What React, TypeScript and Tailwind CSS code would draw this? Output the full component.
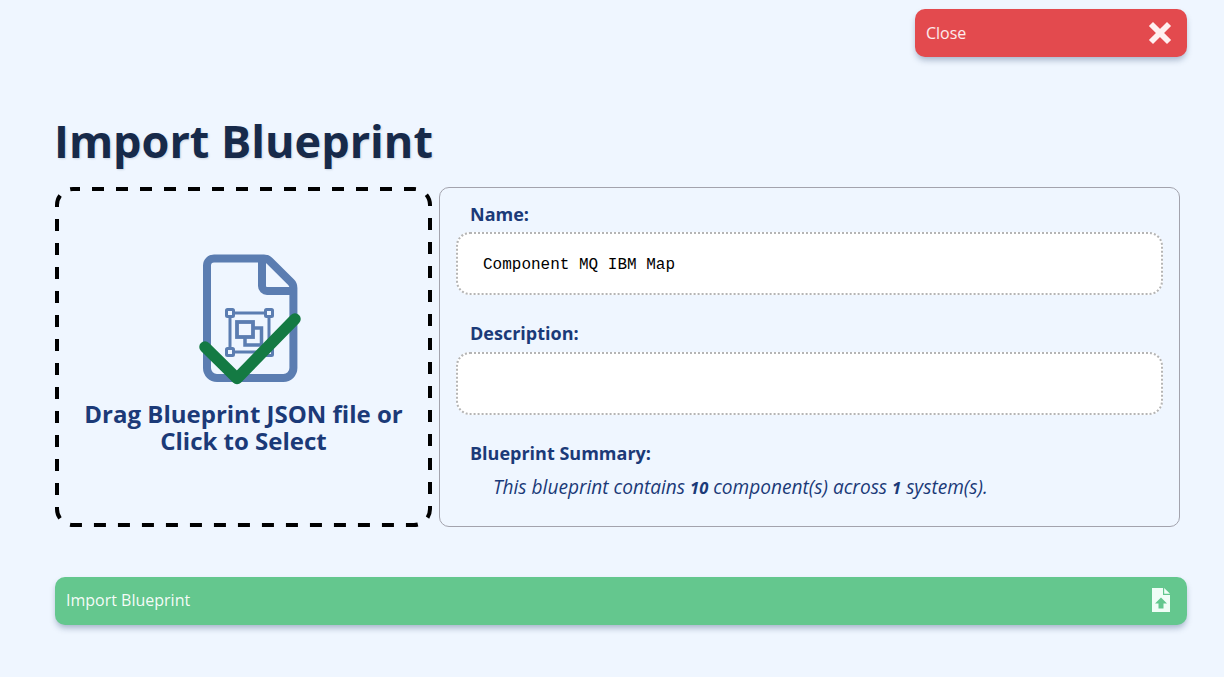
import { X } from "lucide-react";

const FONT = "font-['Open_Sans',sans-serif]";

function BlueprintIcon() {
  return (
    <svg width="140" height="150" viewBox="0 0 140 150" fill="none" className="ml-3 mt-[-8px]">
      <path
        d="M34 18.5H84a8 8 0 0 1 5.6 2.3L111 42.2a8 8 0 0 1 2.4 5.7V128a10 10 0 0 1-10 10H37a10 10 0 0 1-10-10V25.5a7 7 0 0 1 7-7Z"
        stroke="#5b7db1"
        strokeWidth="8"
      />
      <path d="M82 18v28a5 5 0 0 0 5 5h26" stroke="#5b7db1" strokeWidth="8" />
      <g stroke="#5b7db1" strokeWidth="3">
        <rect x="50" y="73" width="39" height="39" />
        <rect x="46.5" y="69.5" width="7" height="7" rx="1" fill="#eff6ff" />
        <rect x="85.5" y="69.5" width="7" height="7" rx="1" fill="#eff6ff" />
        <rect x="46.5" y="108.5" width="7" height="7" rx="1" fill="#eff6ff" />
        <rect x="85.5" y="108.5" width="7" height="7" rx="1" fill="#eff6ff" />
      </g>
      <rect x="57" y="82" width="16" height="15" stroke="#5b7db1" strokeWidth="3.8" />
      <path d="M73 88H81.5V105H65V97" stroke="#5b7db1" strokeWidth="3.5" />
      <path d="M25 107L57 138.5L115 79" stroke="#147a43" strokeWidth="11.5" strokeLinecap="round" strokeLinejoin="round" />
    </svg>
  );
}

function FileUpIcon() {
  return (
    <svg width="18" height="24" viewBox="0 0 18 24">
      <path d="M0 0H11V7H18V24H0Z" fill="#f0fdf6" />
      <path d="M12.2 0L18 5.8H12.2Z" fill="#f0fdf6" />
      <path d="M9 9.5L15 15.5H11.5V20.5H6.5V15.5H3Z" fill="#64c78e" />
    </svg>
  );
}

export default function App() {
  return (
    <div className={`${FONT} min-h-screen bg-[#eff6ff] pt-[9px] pl-[55px] pr-[37px]`}>
      <div className="flex justify-end">
        <button
          type="button"
          className="flex h-12 w-[272px] items-center justify-between rounded-[10px] bg-[#e34a4e] pb-px pl-[11px] pr-[13px] text-[16px] text-white/90 shadow-[0_4px_6px_-1px_rgba(30,58,100,0.35)]"
        >
          <span>Close</span>
          <X className="h-7 w-7 text-[#fff0f0]" strokeWidth={5} strokeLinecap="square" />
        </button>
      </div>

      <h1 className="-ml-px mt-[53px] h-[77px] text-[45px] font-bold leading-[61px] text-[#172a4a] [text-shadow:1px_1px_2px_rgba(23,42,74,0.15)]">
        Import Blueprint
      </h1>

      <div className="flex gap-[7px]">
        {/* the dash pattern is longer than a browser's dashed border, so it is drawn */}
        <div className="relative flex h-[340px] w-[377px] shrink-0 flex-col items-center justify-center pb-[13px]">
          <svg className="absolute inset-0" width="377" height="340" fill="none">
            <rect
              x="2"
              y="2"
              width="373"
              height="336"
              rx="16"
              stroke="#000"
              strokeWidth="4"
              strokeDasharray="12 12"
              strokeDashoffset="5"
            />
          </svg>
          <BlueprintIcon />
          <p className="mt-[10px] text-center text-[24px] font-bold leading-[27px] text-[#1b3a78]">
            Drag Blueprint JSON file or
            <br />
            Click to Select
          </p>
        </div>

        <div className="h-[340px] w-[741px] rounded-[10px] border border-[#a3a3ad] px-4 pt-[14px]">
          <label className="block pl-[14px] text-[18px] font-bold leading-[24px] text-[#1b3a78]">Name:</label>
          <div className="mt-[6px] flex h-[63px] items-center rounded-[14px] border-2 border-dotted border-[#b5b5b5] bg-white pl-[25px] pt-[2px] font-['Liberation_Mono',monospace] text-[16px] text-black">
            Component MQ IBM Map
          </div>
          <label className="mt-[26px] block pl-[14px] text-[18px] font-bold leading-[24px] text-[#1b3a78]">
            Description:
          </label>
          <div className="mt-[7px] h-[63px] rounded-[14px] border-2 border-dotted border-[#b5b5b5] bg-white" />
          <label className="mt-[26px] block pl-[14px] text-[18px] font-bold leading-[24px] text-[#1b3a78]">
            Blueprint Summary:
          </label>
          <p className="mt-[10px] pl-[37px] text-[19.1px] italic leading-[24px] text-[#1b3a78]">
            This blueprint contains <b className="text-[16.5px]">10</b> component(s) across{" "}
            <b className="text-[16.5px]">1</b> system(s).
          </p>
        </div>
      </div>

      <button
        type="button"
        className="mt-[50px] flex h-12 w-full items-center justify-between rounded-[10px] bg-[#64c78e] pb-[2px] pl-[11px] pr-[17px] text-[16px] text-white/95 shadow-[0_4px_6px_-1px_rgba(30,58,100,0.35)]"
      >
        <span>Import Blueprint</span>
        <FileUpIcon />
      </button>
    </div>
  );
}
